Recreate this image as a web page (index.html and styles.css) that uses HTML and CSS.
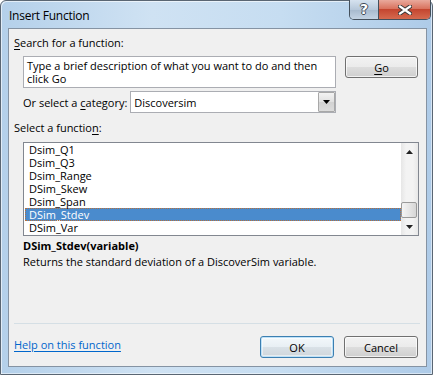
FILE: index.html
```html
<!DOCTYPE html>
<html lang="en">
<head>
<meta charset="UTF-8">
<meta name="viewport" content="width=device-width, initial-scale=1.0">
<title>Insert Function</title>
<link rel="stylesheet" href="styles.css">
</head>
<body>
  <div class="window">
    <div class="titlebar">
      <span class="title">Insert Function</span>
      <div class="caption-btns">
        <span class="cap-btn cap-help">?</span>
        <span class="cap-btn cap-close">
          <svg width="14" height="10" viewBox="0 0 14 10">
            <path d="M2 1.5 L12 8.5 M12 1.5 L2 8.5" stroke="#3a3a3a" stroke-width="4.2" stroke-linecap="square"/>
            <path d="M2 1.5 L12 8.5 M12 1.5 L2 8.5" stroke="#fff" stroke-width="2.2" stroke-linecap="square"/>
          </svg>
        </span>
      </div>
    </div>

    <div class="client">
      <div class="label"><u>S</u>earch for a function:</div>

      <div class="search-row">
        <div class="searchbox">Type a brief description of what you want to do and then click Go</div>
        <button class="btn go"><u>G</u>o</button>
      </div>

      <div class="category-row">
        <span>Or select a <u>c</u>ategory:</span>
        <div class="combo">
          <span class="combo-text">Discoversim</span>
          <span class="combo-btn">
            <svg width="7" height="4" viewBox="0 0 7 4"><path d="M0 0 H7 L3.5 4 Z" fill="#000"/></svg>
          </span>
        </div>
      </div>

      <div class="label label-fn">Select a functio<u>n</u>:</div>

      <div class="listbox">
        <ul class="items">
          <li>Dsim_Q1</li>
          <li>Dsim_Q3</li>
          <li>Dsim_Range</li>
          <li>DSim_Skew</li>
          <li>Dsim_Span</li>
          <li class="selected">DSim_Stdev</li>
          <li>DSim_Var</li>
        </ul>
        <div class="scrollbar">
          <span class="sb-arrow">
            <svg width="7" height="4" viewBox="0 0 7 4"><path d="M0 4 H7 L3.5 0 Z" fill="#222"/></svg>
          </span>
          <div class="sb-track"><span class="sb-thumb"></span></div>
          <span class="sb-arrow">
            <svg width="7" height="4" viewBox="0 0 7 4"><path d="M0 0 H7 L3.5 4 Z" fill="#222"/></svg>
          </span>
        </div>
      </div>

      <div class="fn-sig">DSim_Stdev(variable)</div>
      <div class="fn-desc">Returns the standard deviation of a DiscoverSim variable.</div>

      <div class="separator"></div>

      <div class="footer">
        <a href="#" class="help-link">Help on this function</a>
        <div class="footer-btns">
          <button class="btn default">OK</button>
          <button class="btn">Cancel</button>
        </div>
      </div>
    </div>
  </div>
</body>
</html>
```
FILE: styles.css
```css
* {
  box-sizing: border-box;
}
body {
  margin: 0;
  font-family: 'Open Sans', sans-serif;
  font-size: 11px;
  line-height: 13px;
  color: #000;
  background: #fff;
}
u {
  text-decoration-thickness: 1px;
  text-underline-offset: 2px;
}

/* window frame */
.window {
  width: 433px;
  height: 375px;
  border: 1px solid #5a6673;
  border-radius: 6px 6px 0 0;
  padding: 0 5px 6px 7px;
  background: linear-gradient(to right, #b4d0ea, #cfe2f3 35%, #c6ddf1 65%, #aecbe8);
  box-shadow: inset 1px 1px 0 rgba(255,255,255,0.6), inset -1px -1px 0 rgba(255,255,255,0.5);
}
.titlebar {
  height: 28px;
  display: flex;
  justify-content: space-between;
  align-items: flex-start;
  margin-top: -1px;
  margin-right: -4px;
}
.title {
  margin-top: 9px;
  margin-left: 1px;
  font-size: 12px;
  line-height: 13px;
  letter-spacing: -0.25px;
}
.caption-btns {
  display: flex;
  height: 20px;
  border: 1px solid #44505c;
  border-top: none;
  border-radius: 0 0 5px 5px;
  overflow: hidden;
}
.cap-btn {
  display: flex;
  align-items: center;
  justify-content: center;
  height: 19px;
}
.cap-help {
  width: 29px;
  border-right: 1px solid #44505c;
  background: linear-gradient(#d6e2ef, #b7c8da 50%, #a6b9cd 51%, #c3d3e3);
  color: #fff;
  font-family: 'DejaVu Sans', sans-serif;
  font-weight: bold;
  font-size: 14px;
  text-shadow: 1px 0 0 #3f4a55, -1px 0 0 #3f4a55, 0 1px 0 #3f4a55, 0 -1px 0 #3f4a55;
}
.cap-close {
  width: 51px;
  background: linear-gradient(#e9a99c, #d9735f 45%, #c44630 50%, #d56a4f);
}

/* client area */
.client {
  height: 339px;
  border: 1px solid #8593a3;
  background: #f0f0f0;
  padding: 0 8px 0 5px;
}
.label {
  margin-top: 7px;
}
.label-fn {
  margin-top: 8px;
}

.search-row {
  display: flex;
  align-items: flex-start;
  margin-top: 7px;
  margin-left: 9px;
}
.searchbox {
  width: 313px;
  height: 32px;
  border: 1px solid #abadb3;
  background: #fff;
  padding: 2px 10px 0 3px;
}
.btn {
  width: 74px;
  height: 22px;
  padding: 0;
  font-family: inherit;
  font-size: 11px;
  color: #000;
  border: 1px solid #707070;
  border-radius: 3px;
  background: linear-gradient(#f2f2f2, #ebebeb 50%, #dddddd 51%, #cfcfcf);
  box-shadow: inset 0 0 0 1px rgba(255,255,255,0.7);
}
.go {
  margin-left: 9px;
  width: 73px;
}
.btn.default {
  border-color: #3c7fb1;
  box-shadow: inset 0 0 0 1px #bfe2f8, inset 0 0 0 2px rgba(255,255,255,0.5);
  background: linear-gradient(#f3f8fb, #e8eff4 50%, #d9e1e7 51%, #cfd6db);
}

.category-row {
  display: flex;
  align-items: center;
  margin-top: 3px;
  margin-left: 9px;
  height: 22px;
}
.combo {
  display: flex;
  width: 206px;
  height: 22px;
  margin-left: 3px;
  border: 1px solid #abadb3;
  background: #fff;
}
.combo-text {
  flex: 1;
  padding: 4px 3px 0;
}
.combo-btn {
  width: 17px;
  height: 20px;
  display: flex;
  align-items: center;
  justify-content: center;
  border: 1px solid #a8a8a8;
  border-radius: 1px;
  background: linear-gradient(#f3f3f3, #e0e0e0 50%, #d2d2d2 51%, #dcdcdc);
}

/* list */
.listbox {
  display: flex;
  width: 396px;
  height: 94px;
  margin-top: 8px;
  margin-left: 9px;
  border: 1px solid #828790;
  background: #fff;
  overflow: hidden;
}
.items {
  flex: 1;
  list-style: none;
  margin: 0;
  padding: 0 0 0 1px;
}
.items li {
  height: 13px;
  padding-left: 4px;
  line-height: 13px;
}
.items li.selected {
  background: #4a8bcd;
  color: #fff;
  outline: 1px dotted #b8703a;
  outline-offset: -1px;
}
.scrollbar {
  width: 17px;
  display: flex;
  flex-direction: column;
  background: linear-gradient(to right, #e6e6e6, #f3f3f3 30%, #f3f3f3 70%, #e8e8e8);
}
.sb-arrow {
  height: 17px;
  display: flex;
  align-items: center;
  justify-content: center;
}
.sb-track {
  flex: 1;
  display: flex;
  flex-direction: column;
  justify-content: flex-end;
}
.sb-thumb {
  width: 16px;
  height: 16px;
  border: 1px solid #9a9a9a;
  border-radius: 2px;
  background: linear-gradient(to right, #f4f4f4, #e6e6e6 50%, #d6d6d6);
}

.fn-sig {
  margin-top: 3px;
  margin-left: 9px;
  font-weight: bold;
}
.fn-desc {
  margin-top: 3px;
  margin-left: 9px;
}

.separator {
  margin-top: 55px;
  width: 406px;
  height: 1px;
  background: #d5dfe5;
}

.footer {
  display: flex;
  justify-content: space-between;
  align-items: flex-start;
  margin-top: 12px;
}
.help-link {
  margin-top: 2px;
  color: #0066cc;
  text-decoration: underline;
  text-underline-offset: 2px;
}
.footer-btns {
  display: flex;
  gap: 10px;
}
```
